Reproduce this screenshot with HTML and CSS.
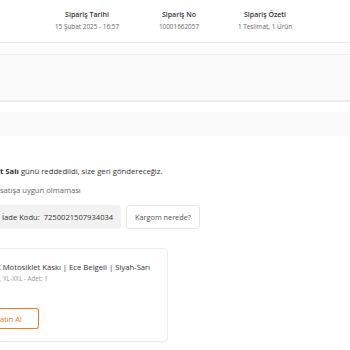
FILE: index.html
```
<!DOCTYPE html>
<html lang="tr">
<head>
<meta charset="utf-8">
<link rel="stylesheet" href="styles.css">
</head>
<body>
<div class="page">
  <header class="summary">
    <div class="col c1"><div class="lbl">Sipariş Tarihi</div><div class="val">15 Şubat 2025 - 16:57</div></div>
    <div class="col c2"><div class="lbl">Sipariş No</div><div class="val">10001662057</div></div>
    <div class="col c3"><div class="lbl">Sipariş Özeti</div><div class="val">1 Teslimat, 1 Ürün</div></div>
  </header>
  <div class="strip"></div>
  <div class="band band-a"></div>
  <div class="gap"></div>
  <div class="band band-b"></div>
  <section class="status">
    <p class="msg"><b>t Salı</b> günü reddedildi, size geri göndereceğiz.</p>
    <p class="reason">satışa uygun olmaması</p>
    <div class="actions">
      <div class="code">İade Kodu:&nbsp; 7250021507934034</div>
      <button class="track">Kargom nerede?</button>
    </div>
  </section>
  <div class="product">
    <div class="ptitle">K Motosiklet Kaskı | Ece Belgeli | Siyah-Sarı</div>
    <div class="pmeta">, XL-XXL - Adet: 1</div>
    <button class="buy">atın Al</button>
  </div>
</div>
</body>
</html>
```
FILE: styles.css
```
* { box-sizing: border-box; }
html, body { margin: 0; padding: 0; background: #fff; }
body { font-family: "Open Sans", "Noto Sans", sans-serif; color: #333; width: 350px; height: 350px; overflow: hidden; }
.page { width: 350px; }

.summary { display: flex; height: 43px; padding-left: 37px; padding-top: 10px; border-bottom: 1px solid #ececec; background: #fff; }
.col { text-align: center; }
.c1 { width: 100px; }
.c2 { width: 84px; }
.c3 { width: 88px; }
.lbl { font-size: 7px; font-weight: 600; color: #333; line-height: 10px; }
.val { font-size: 6.4px; color: #666; line-height: 10px; margin-top: 2px; }

.strip { height: 12px; background: #fcfcfc; border-bottom: 1px solid #efefef; }
.band-a { height: 47px; background: #fafafa; border-bottom: 2px solid #ececec; }
.gap { height: 10px; background: #fff; }
.band-b { height: 24px; background: #fafafa; }

.status { padding-top: 30px; }
.msg { margin: 0; font-size: 7.7px; line-height: 10px; color: #333; }
.msg b { font-weight: 700; }
.reason { margin: 9px 0 0; font-size: 7.6px; line-height: 10px; color: #666; }
.actions { display: flex; gap: 5px; margin-top: 10px; }
.code { width: 121px; height: 24px; background: #f2f2f2; border-radius: 0 4px 4px 0; font-size: 7.6px; font-weight: 500; color: #333; display: flex; align-items: center; padding-left: 2px; white-space: nowrap; }
.track { height: 24px; width: 74px; background: #fff; border: 1px solid #e6e6e6; border-radius: 3px; font-family: inherit; font-size: 7.3px; color: #555; padding: 0; }

.product { width: 168px; margin-top: 19px; height: 94px; border: 1px solid #ececec; border-left: none; border-radius: 0 5px 5px 0; box-shadow: 0 1px 2px rgba(0,0,0,0.04); padding-top: 13px; overflow: hidden; }
.ptitle { font-size: 7.7px; line-height: 10px; color: #333; margin-left: -4px; white-space: nowrap; }
.pmeta { font-size: 6.2px; line-height: 8px; color: #999; margin-top: 3px; }
.buy { display: block; margin-top: 25px; width: 39px; height: 21px; background: #fff; border: 1px solid #f27a1a; border-left: none; border-radius: 0 3px 3px 0; color: #f27a1a; font-family: inherit; font-size: 7.5px; text-align: left; padding: 0; }
```
